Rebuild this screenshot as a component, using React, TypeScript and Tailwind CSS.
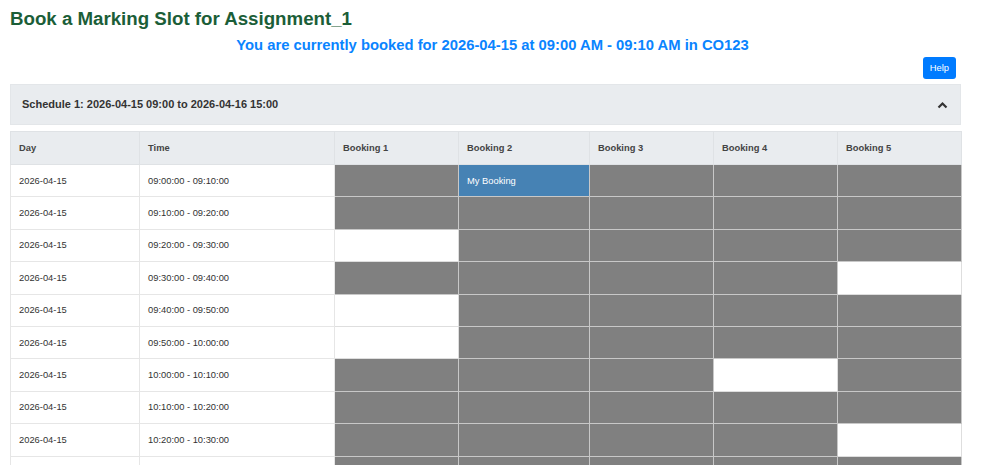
import React from "react";

type C = "G" | "W" | "B";
const rows: { day: string; time: string; cells: C[] }[] = [
  { day: "2026-04-15", time: "09:00:00 - 09:10:00", cells: ["G", "B", "G", "G", "G"] },
  { day: "2026-04-15", time: "09:10:00 - 09:20:00", cells: ["G", "G", "G", "G", "G"] },
  { day: "2026-04-15", time: "09:20:00 - 09:30:00", cells: ["W", "G", "G", "G", "G"] },
  { day: "2026-04-15", time: "09:30:00 - 09:40:00", cells: ["G", "G", "G", "G", "W"] },
  { day: "2026-04-15", time: "09:40:00 - 09:50:00", cells: ["W", "G", "G", "G", "G"] },
  { day: "2026-04-15", time: "09:50:00 - 10:00:00", cells: ["W", "G", "G", "G", "G"] },
  { day: "2026-04-15", time: "10:00:00 - 10:10:00", cells: ["G", "G", "G", "W", "G"] },
  { day: "2026-04-15", time: "10:10:00 - 10:20:00", cells: ["G", "G", "G", "G", "G"] },
  { day: "2026-04-15", time: "10:20:00 - 10:30:00", cells: ["G", "G", "G", "G", "W"] },
  { day: "2026-04-15", time: "10:30:00 - 10:40:00", cells: ["G", "G", "G", "G", "G"] },
];

const colW = ["w-[129px]", "w-[195px]", "w-[124px]", "w-[131px]", "w-[124px]", "w-[124px]", "w-[124px]"];

function Cell({ c }: { c: C }) {
  if (c === "G") return <td className="bg-[#808080] border border-[#c8c8c8]" />;
  if (c === "B")
    return (
      <td className="bg-[#4682b4] border border-[#c8c8c8] px-[8px] text-white text-[9.35px]">My Booking</td>
    );
  return <td className="bg-white border border-[#dedede]" />;
}

export default function App() {
  return (
    <div
      className="w-[985px] px-[10px] bg-white text-[#333]"
      style={{ fontFamily: '"Liberation Sans", Arial, sans-serif' }}
    >
      <h1 className="pt-[8px] text-[18.7px] leading-[21px] font-bold text-[#1b5e38]">
        Book a Marking Slot for Assignment_1
      </h1>
      <div className="mt-[8px] text-center text-[14.8px] leading-[17px] font-bold text-[#0a84ff]">
        You are currently booked for 2026-04-15 at 09:00 AM - 09:10 AM in CO123
      </div>
      <div className="w-[951px] flex justify-end pr-[5px] mt-[3px]">
        <button className="h-[22px] px-[7px] rounded-[3px] bg-[#007bff] text-white text-[9.35px] leading-[22px]">
          Help
        </button>
      </div>
      <div className="w-[951px] mt-[5px] h-[41px] bg-[#e9ecef] border border-[#e3e6e9] flex items-center justify-between pl-[11px] pr-[12px]">
        <span className="text-[11px] font-bold text-[#333]">Schedule 1: 2026-04-15 09:00 to 2026-04-16 15:00</span>
        <svg width="11" height="8" viewBox="0 0 11 8" fill="none">
          <path d="M1.5 6.5 L5.5 2.5 L9.5 6.5" stroke="#333" strokeWidth="2.2" />
        </svg>
      </div>
      <table className="w-[951px] mt-[6px] border-collapse table-fixed text-[9.35px]">
        <thead>
          <tr className="h-[33px] bg-[#e9ecef]">
            {["Day", "Time", "Booking 1", "Booking 2", "Booking 3", "Booking 4", "Booking 5"].map((h, i) => (
              <th
                key={h}
                className={`${colW[i]} text-left font-bold text-[#444] px-[8px] border border-[#dfe2e5]`}
              >
                {h}
              </th>
            ))}
          </tr>
        </thead>
        <tbody>
          {rows.map((r, i) => (
            <tr key={i} className="h-[32.4px]">
              <td className="px-[8px] text-[#333] border border-[#e6e6e6]">{r.day}</td>
              <td className="px-[8px] text-[#333] border border-[#e6e6e6]">{r.time}</td>
              {r.cells.map((c, j) => (
                <Cell key={j} c={c} />
              ))}
            </tr>
          ))}
        </tbody>
      </table>
    </div>
  );
}
